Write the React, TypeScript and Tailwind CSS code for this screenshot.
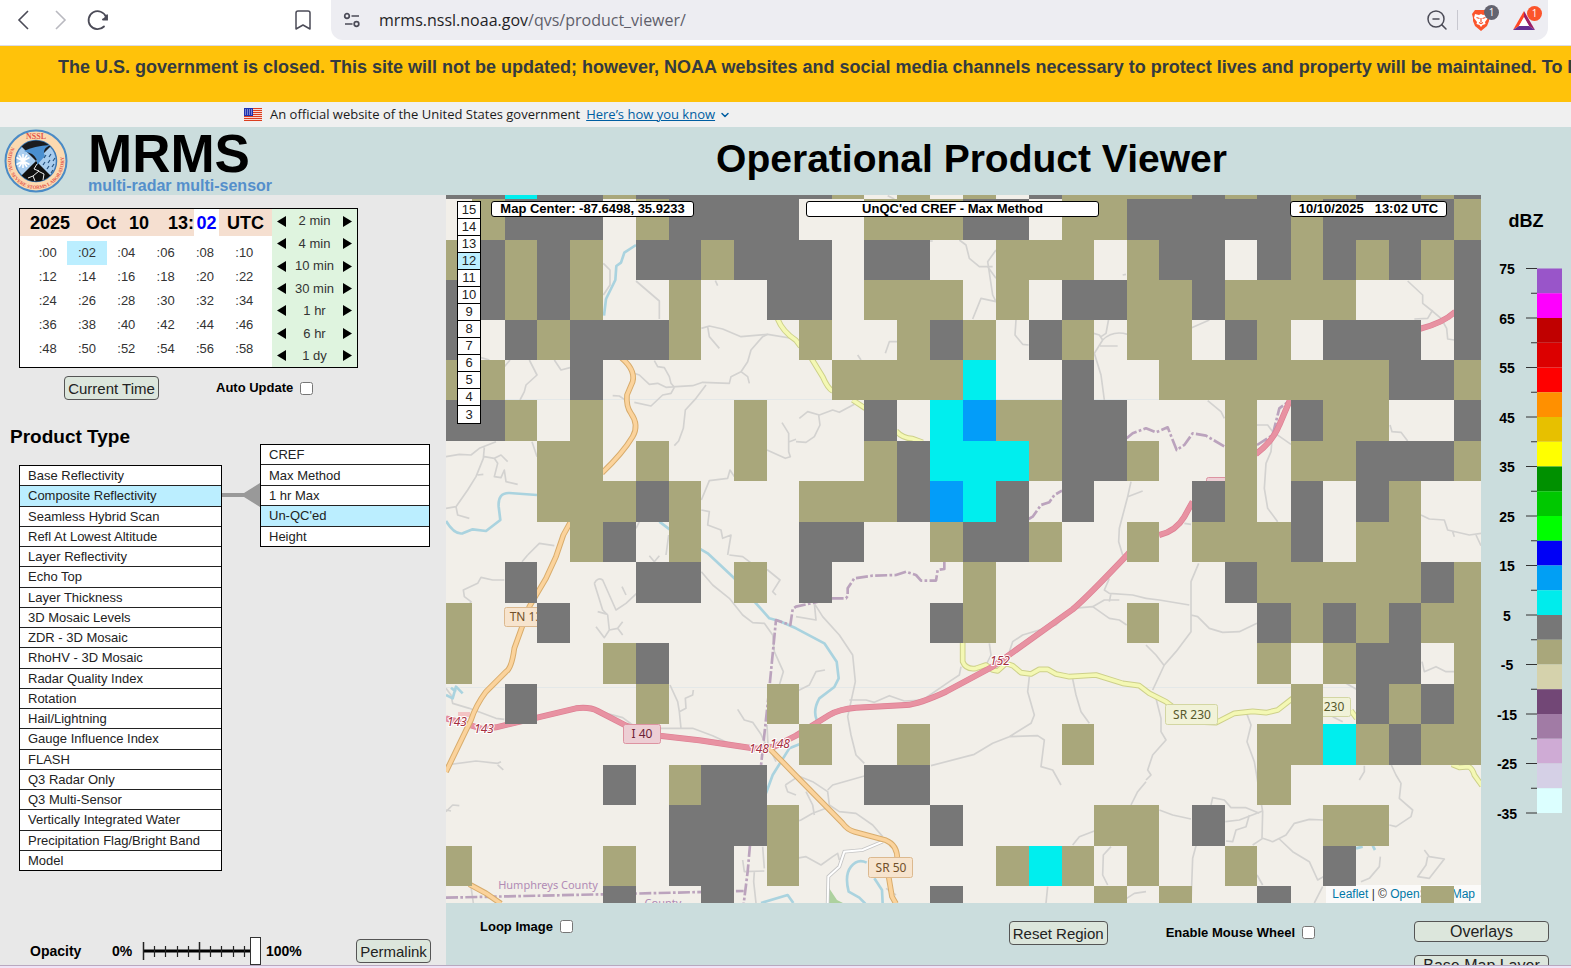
import { useState } from 'react'
import { ChevronDown, Bookmark, ZoomOut } from 'lucide-react'

const minutes = Array.from({ length: 30 }, (_, i) => ':' + String(i * 2).padStart(2, '0'))

const steps = ['2 min', '4 min', '10 min', '30 min', '1 hr', '6 hr', '1 dy']

const products = [
  'Base Reflectivity',
  'Composite Reflectivity',
  'Seamless Hybrid Scan',
  'Refl At Lowest Altitude',
  'Layer Reflectivity',
  'Echo Top',
  'Layer Thickness',
  '3D Mosaic Levels',
  'ZDR - 3D Mosaic',
  'RhoHV - 3D Mosaic',
  'Radar Quality Index',
  'Rotation',
  'Hail/Lightning',
  'Gauge Influence Index',
  'FLASH',
  'Q3 Radar Only',
  'Q3 Multi-Sensor',
  'Vertically Integrated Water',
  'Precipitation Flag/Bright Band',
  'Model',
]

const subProducts = ['CREF', 'Max Method', '1 hr Max', "Un-QC'ed", 'Height']

const zoomLevels = [15, 14, 13, 12, 11, 10, 9, 8, 7, 6, 5, 4, 3]

// k = -5..0 dBZ, g = 0..5, c = 5..10, b = 10..15
const radar = [
  'ggcggkggggggk.k.k.gkkkkgkgkkggkg',
  '.kggg.kgggg..kkkgg.kkgggggkggggk',
  'kgkgk.ggkggg.gg..kkk.kgg.gkgkgkg',
  'ggkgk..k..gg.kkk.k.ggkkgkkkk...g',
  'g.gkgggk...k..kgk.gk.kk.gk.ggg.g',
  'kk..g.......kkkkc..g..kkkkkkkggk',
  'ggk.k....k...g.cbkkgg...k.gkk..g',
  '...kk.k..k...kgccckggk..k.kkgggk',
  '...kkkgk...kkkgbcg.g...gk.g.gk..',
  '....kg.k...gg..kggk..k.kkkg.kk..',
  '..g...gg.k.g....k.......gkkkkkgk',
  'k..g...........gk....k...gkgkgkk',
  'k....kg..................k.kgg.k',
  '..g...k...k...............k.gkgk',
  '...........k..k....k.....kkckgkk',
  '.....g.kgg...gg..........k......',
  '.......gggk....g....kk.g...kk...',
  'k....k.gg.k......kck.k..k..g....',
  '.....g..g......g....k.k..g....k.',
]

const colX = [
  0, 26, 59, 91, 124, 157, 190, 223, 255, 288, 321, 353, 386, 418, 451, 484, 517, 550, 583, 616,
  648, 681, 713, 746, 779, 811, 845, 877, 910, 943, 975, 1008, 1035,
]
const rowY = [
  0, 4, 45, 85, 125, 165, 205, 246, 286, 327, 367, 408, 448, 489, 529, 570, 610, 651, 691, 708,
]

const cellColor: Record<string, string> = {
  k: '#a9a77b',
  g: '#777777',
  c: '#00eeee',
  b: '#039df9',
}

const scale = [
  '#9955c9', '#fe00fe', '#c00000', '#dc0000', '#ff0000', '#ff9000', '#e7c000', '#ffff00',
  '#009000', '#00c800', '#00ff00', '#0000f6', '#019ff4', '#00ecec', '#777777', '#a9a77b',
  '#d5d2ac', '#724776', '#a17ba5', '#cfabd5', '#d5d0e6', '#dcffff',
]

const interstate = [
  'M0 1570L45 1582L110 1602L150 1597L273 1568L390 1540Q430 1535 455 1548L540 1592L600 1612L640 1622L760 1636L930 1661L985 1655L1050 1622L1150 1560Q1180 1542 1230 1538L1380 1530Q1420 1527 1500 1490L1640 1415L1700 1372L1880 1243Q1920 1210 2045 1078L2080 1040',
  'M2140 1020Q2190 1008 2215 965L2240 920',
  'M2430 777Q2480 740 2500 690L2532 615',
  'M2920 402Q2990 385 3028 350',
]
const stateRoads = [
  'M515 480Q570 520 560 560L543 600Q540 635 555 655Q580 690 560 725Q530 775 468 834',
  'M373 982L352 1020L330 1085L300 1150L250 1235L205 1360Q197 1420 180 1430L120 1490Q90 1530 75 1575L0 1730',
  'M70 2068L120 2095L165 2126',
  'M968 1658L1050 1742L1190 1885Q1205 1905 1225 1910L1320 1936Q1355 1950 1354 1995L1328 2045L1338 2105L1350 2126',
]
const yellowRoads = [
  'M995 372Q1010 410 1050 436L1064 455',
  'M1096 490L1130 545Q1145 580 1160 588',
  'M1220 615L1258 640',
  'M1350 708Q1370 730 1400 731L1430 742',
  'M1550 1340V1400Q1560 1425 1590 1420L1620 1410L1640 1425L1655 1428L1680 1405L1700 1412L1725 1433L1755 1437L1780 1423H1805L1830 1437L1870 1445L1950 1440L2030 1465L2080 1472L2110 1495L2160 1520L2240 1580L2310 1583L2365 1555L2420 1549L2460 1553L2495 1545L2540 1510',
  'M2715 1547L2732 1570',
  'M3018 1708L3040 1717L3068 1715Q3080 1722 3085 1740L3108 1772',
]
const rivers = [
  'M570 150L535 173L525 203L511 213L508 255L480 312L474 362',
  'M273 900L190 894Q155 893 158 935L163 975L120 1008L80 1003L50 1015Q25 1020 0 978',
  'M640 980L700 1025L785 1075L865 1150L930 1225L970 1270L1000 1278L1050 1300L1135 1345L1172 1400L1178 1450L1165 1476L1120 1510Q1100 1545 1112 1575',
  'M1060 1648L1030 1660L980 1740L960 1795',
  'M945 2124L1025 2100L1042 2124',
  'M1258 2126L1240 2108L1208 2090Q1195 2040 1215 2015Q1235 1990 1262 2003',
  'M1285 2050L1308 2085L1310 2126',
  'M0 1500L20 1510L30 1475L50 1495M15 1478L30 1490',
  'M2730 1960L2750 1955M2780 1952L2787 1965',
]
const county = [
  'M1748 972L1760 965L1785 930L1810 922L1825 900L1848 887',
  'M2042 730L2060 715L2100 700L2130 712L2165 697L2180 735L2192 765L2215 750L2240 715L2280 722L2338 756',
  'M2433 750L2480 720L2500 640L2530 618',
  'M1495 1100V1122L1475 1125L1470 1157H1425L1410 1140L1380 1130L1350 1140L1280 1142L1225 1150L1205 1180V1203L1200 1210L1160 1210L1050 1235L1040 1242L1033 1290L990 1275L970 1480L945 1712',
  'M912 1950L905 2030L893 2126',
  'M0 2108L470 2098L893 2088',
]
const lanes = [
  'M472 205L492 225V270L472 300M570 258L640 318V372',
  'M105 488L130 495M175 515L192 495M250 495L273 540L240 570L235 590L222 615M325 495L345 525L372 518',
  'M500 602L520 603L548 622M560 533L580 540L610 568L635 565L660 577L690 575L740 572L770 562L850 565L855 545L885 530L905 500L915 465L950 425L965 418L1050 432M625 497L635 515L655 518L670 545L675 565L685 577L675 595L650 600L615 633L565 622M780 570L750 610L718 645L712 700L698 738L685 752M885 530L905 545L910 565',
  'M766 400L790 393L830 402L885 425L965 418M785 395L790 425L820 460M808 257L815 272',
  'M0 785L40 778L75 780L100 760L150 740M115 757L112 790L90 845L65 885L30 935L0 940M115 785L145 790L155 805L145 845L165 848L175 825L180 860L215 868M145 790L165 780L185 800M30 935L35 960L70 970M258 740L273 785M95 840L112 838',
  'M766 915L790 857L845 850L852 825L865 845M766 945L790 950L785 990L825 1005L830 1030L855 1020L850 1050L845 1080M1008 683L1028 715V770L1033 785L1018 790L963 765M1030 740L1050 733',
  'M245 1080L280 1045L325 1052M570 1000L580 980M660 1080L668 1020',
  'M245 1080L228 1100M175 1155H140L105 1147L95 1165L52 1185L55 1205L75 1220L68 1235',
  'M445 1165Q455 1145 470 1155L510 1245L540 1225L572 1195M445 1165L470 1245L485 1260L490 1305L515 1300L530 1280M450 1295L475 1328L490 1305M515 1300L530 1320M528 1175L540 1200M455 1250L485 1258M610 1082L625 1100L640 1082',
  'M766 1130L800 1170L850 1210L890 1260L920 1283L955 1285L980 1320L985 1370L1012 1430L1000 1470M850 1080L890 1085L930 1115L965 1125L1002 1155L980 1190L990 1200',
  'M672 1470L695 1520L700 1550L705 1600M700 1550L720 1540L718 1510L740 1500L742 1485M640 1600L740 1600L800 1622L860 1650L930 1655M875 1543L895 1575L920 1582L945 1618L960 1650M455 1548L530 1568L560 1590',
  'M0 1480L15 1500L20 1525L70 1540L150 1570L175 1573M0 1710L90 1698L155 1705L165 1700M155 1710L172 1725M0 1850L20 1830L40 1832M0 1845L15 1848M75 2075L82 2124',
  'M963 1590L966 1650L990 1700M1018 1770L1048 1750M1018 1770L1025 1790L1050 1800M950 1955L955 2020M890 1995L895 2030L955 2028M925 2030L923 2060L930 2124',
  'M1400 138H1460M1540 135L1560 150L1570 190L1600 215H1640M1650 165L1625 200L1640 300L1650 320L1605 310L1580 372M1625 215L1650 250',
  'M1318 475L1330 440H1353M1235 480L1245 495M1710 375L1707 420L1730 448L1748 450M1325 2L1345 12',
  'M1060 670L1085 650L1120 660L1160 645L1180 652L1225 628M1118 660L1122 690L1105 725L1080 742L1050 740',
  'M1943 415L1960 420L1970 435L1945 475L1965 540L1975 615M1970 435Q2000 405 2045 418M1962 453H2015M1988 372L1980 415L1965 425M2030 240L2040 238',
  'M2055 860L2045 905L2090 888M2045 905L2020 1000L2018 1040L2030 1080',
  'M2237 398L2290 375M2885 258L2930 300L2930 325L2955 345L2985 370L3002 400L3005 432L3025 435M2905 372L2945 370L2960 345',
  'M2285 617L2325 650L2335 670M2433 690L2465 690L2480 710L2535 748M2480 710L2475 770L2460 805L2455 880L2465 940L2495 980M2832 690L2838 710L2865 712L2885 738M2925 960L2950 972L2995 975L3005 1005L3070 1020L3105 1015M3090 1020L3105 1052M3025 1025L3020 1010M2215 985L2235 988',
  'M1050 1265L1110 1275L1105 1225M1105 1225L1130 1265L1180 1320L1220 1380L1228 1460L1215 1520L1205 1565L1215 1620L1230 1680L1255 1705M1050 1490L1090 1470L1110 1430L1137 1425M1210 1515L1260 1515L1285 1522L1330 1502L1375 1518L1430 1515M1430 1515L1510 1460L1540 1440L1545 1415M1630 1345L1635 1380L1620 1410',
  'M1455 1712L1585 1678L1640 1645L1690 1625L1755 1585L1765 1560L1745 1490L1750 1445M1690 1625L1775 1622L1795 1635L1785 1715L1820 1725L1845 1770M1880 1452L1890 1500L1905 1550L1930 1585M1690 1370L1700 1340L1730 1320L1830 1290L1880 1240L1940 1235L1975 1215L2020 1215M1940 1235L1990 1270L2020 1275L2042 1290M1990 1150L1975 1185L1990 1195L2060 1200L2100 1210M1990 1220L1995 1195',
  'M1050 1740L1100 1760L1145 1790L1150 1830L1180 1850L1230 1855L1280 1890L1310 1925M1145 1785L1160 1770L1255 1743M1050 1880L1065 1875L1100 1855L1140 1840M1080 1790L1100 1830L1105 1860M1050 1990L1080 1985L1125 2010L1160 1985L1175 1975L1180 1995M1350 2100L1320 2080',
  'M2100 1760L2075 1790L2055 1830M1880 1950L1900 1925L1945 1908M1995 1955L1972 1980L1970 2040L1985 2070M1805 2075L1800 2124M2042 2110L2065 2095L2100 2090',
  'M2258 1105L2235 1160V1310L2190 1370L2155 1410L2120 1485M2100 1350L2130 1380L2155 1412M2100 1210L2140 1215L2230 1230M2235 1260L2255 1265L2290 1300L2330 1312L2380 1310L2433 1285M2130 1510L2145 1570V1610L2160 1635L2120 1680L2105 1725L2115 1740L2100 1755M2400 1550L2415 1590L2403 1640L2425 1700L2435 1760L2450 1850L2448 1930',
  'M2140 1845L2180 1860L2235 1872M2295 1830L2300 1808L2335 1815L2355 1838L2400 1838L2440 1855M2338 1880L2380 1875L2450 1848M2410 1860L2400 1895L2370 1905L2360 1940L2340 1938M2450 1930L2480 1940L2520 1920L2545 1885L2590 1873L2632 1875M2500 1932L2540 1970L2590 2000L2615 2055L2632 2045M2450 1930L2420 1950M2250 1952L2240 1990L2235 2124M2433 2040L2450 2070M2630 2075L2605 2124',
  'M2836 1710L2850 1740L2865 1765L2860 1810L2900 1845L2895 1865L2850 1895L2830 1890M2740 1755L2755 1730L2755 1712M2803 1985L2800 2015L2770 2050L2745 2060M2935 1965L2950 1985L2995 1992L2950 2050L2915 2045L2940 2010L2945 1985M2700 1465L2735 1485M2928 1400L2935 1430L2970 1415L3000 1430L3024 1430M2660 1565L2690 1580',
]

function NsslSeal() {
  return (
    <svg viewBox="0 0 64 64" className="size-16" role="img" aria-label="NSSL">
      <defs>
        <path id="ringBottom" d="M7.750 18A28 28 0 1 0 56.250 18" />
      </defs>
      <circle cx="32" cy="32" r="30.500" fill="#fbd9b0" stroke="#4a8bc6" strokeWidth="2" />
      <circle cx="32" cy="32" r="20.500" fill="#a9cdee" stroke="#3b79b5" strokeWidth="1.500" />
      <path d="M17.500 17.500A20.500 20.500 0 0 1 46.500 17.500L32 32z" fill="#1b1c20" />
      <path d="M17.500 46.500A20.500 20.500 0 0 0 46.500 46.500L32 32z" fill="#111" />
      <path d="M20 22Q30 17 46 16Q37 21 41 27L33 36Q34 29 28 25z" fill="#4a8fd0" />
      <path d="M19 25v14M12.500 28.500l13 7M12.500 35.500l13-7M15 26l8 12M23 26l-8 12" stroke="#fff" strokeWidth="1.600" />
      <path d="M42 26l-2 3M47 25l-2 3M51 29l-2 3M41 33l-2 3M46 31l-2 3M45 37l-2 3M50 35l-2 3M49 41l-2 3" stroke="#27527e" strokeWidth="1.200" />
      <path d="M33 35l-3 5 5 2-6 5 2 5M34 42l6 3-1 6M29 47l-5 2" stroke="#eee" strokeWidth="1" fill="none" />
      <text fontSize="8" fontWeight="700" fill="#e2574c" fontFamily="Liberation Serif, serif" textAnchor="middle" x="32" y="10">
        NSSL
      </text>
      <text fontSize="5" fontWeight="700" fill="#e2574c" fontFamily="Liberation Serif, serif">
        <textPath href="#ringBottom">NATIONAL SEVERE STORMS LABORATORY</textPath>
      </text>
    </svg>
  )
}

function Flag() {
  return (
    <svg viewBox="0 0 18 13" className="h-[13px] w-[18px]" aria-hidden="true">
      <rect width="18" height="13" fill="#fff" />
      {[0, 2, 4, 6, 8, 10, 12].map((y) => (
        <rect key={y} y={y} width="18" height="1.200" fill="#db3e1f" />
      ))}
      <rect width="9" height="8" fill="#1e33b1" />
      <path d="M1 2h7M1 4h7M1 6h7" stroke="#fff" strokeWidth=".8" strokeDasharray="1 1" />
    </svg>
  )
}

function BrowserBar() {
  return (
    <div className="flex h-[46px] shrink-0 items-start border-b border-[#dcdce6] bg-white text-[#4b4b57]">
      <div className="flex h-10 w-[331px] shrink-0 items-center pl-[17px] pr-4">
        <button aria-label="Back">
          <svg viewBox="0 0 12 20" className="h-5 w-3" fill="none" stroke="currentColor" strokeWidth="1.600">
            <path d="M11 1L2 10l9 9" />
          </svg>
        </button>
        <button aria-label="Forward" className="ml-[26px] text-[#b9b9c0]">
          <svg viewBox="0 0 12 20" className="h-5 w-3" fill="none" stroke="currentColor" strokeWidth="1.600">
            <path d="M1 1l9 9-9 9" />
          </svg>
        </button>
        <button aria-label="Reload" className="ml-[19px]">
          <svg viewBox="0 0 24 24" className="size-6" fill="none" stroke="currentColor" strokeWidth="1.800" strokeLinecap="round">
            <path d="M18 18.500A9 9 0 1 1 20 9" />
            <path d="M21.500 6v6h-5.500z" fill="currentColor" stroke="none" />
            <path d="M21 7.500v4h-4" />
          </svg>
        </button>
        <button aria-label="Bookmark" className="ml-auto"><Bookmark className="size-6" strokeWidth={1.500} /></button>
      </div>
      <div className="mr-[23px] flex h-10 grow items-center rounded-xl rounded-t-none bg-[#ededf2] pl-3 pr-3">
        <svg viewBox="0 0 18 18" className="size-[18px]" fill="none" stroke="currentColor" strokeWidth="1.700" aria-hidden="true">
          <circle cx="4" cy="5" r="2.300" />
          <path d="M8.500 5H16M2 13h7.500" />
          <circle cx="13.500" cy="13" r="2.300" />
        </svg>
        <span className="ml-[18px] font-['Open_Sans',sans-serif] text-base text-[#5f5f6b]">
          <span className="text-[#1f1f26]">mrms.nssl.noaa.gov</span>/qvs/product_viewer/
        </span>
        <button aria-label="Zoom out" className="ml-auto"><ZoomOut className="size-6" strokeWidth={1.500} /></button>
        <span className="ml-2 h-5 w-px bg-[#c8c8d0]" />
        <button aria-label="Shields" className="relative ml-3">
          <svg viewBox="0 0 22 24" className="h-6 w-[22px]">
            <path d="M5 2h12l3 4-1 4 0 3-2 5-6 5-6-5-2-5V10L2 6z" fill="#fb542b" />
            <path d="M5 6l4 1 2-1 2 1 4-1 1 4-3 4 .5 2-3 1L11 19l-1.500-2-3-1L7 14l-3-4z" fill="#fff" />
            <path d="M6.500 9.500l3 1M15.500 9.500l-3 1M11 10v4M9 14.500l2 1 2-1" stroke="#fb542b" strokeWidth="1.200" fill="none" />
          </svg>
          <span className="absolute -top-[3px] left-[14px] flex size-[15px] items-center justify-center rounded-full bg-[#63636f] font-['Open_Sans',sans-serif] text-[10px] text-white">1</span>
        </button>
        <button aria-label="Rewards" className="relative ml-5">
          <svg viewBox="0 0 24 21" className="h-[21px] w-6">
            <path d="M12 1L1 20l6-4 5-9z" fill="#ff4724" />
            <path d="M12 1l11 19-6-4-5-9z" fill="#9e1f63" />
            <path d="M1 20h22l-6-4H7z" fill="#662d91" />
            <path d="M12 7.500l5 8.500H7z" fill="#fff" />
          </svg>
          <span className="absolute -top-[4px] left-[15px] flex size-[15px] items-center justify-center rounded-full bg-[#fb542b] font-['Open_Sans',sans-serif] text-[10px] text-white">1</span>
        </button>
      </div>
    </div>
  )
}

function TimePicker() {
  const [minute, setMinute] = useState(':02')
  return (
    <div className="flex h-[160px] w-[339px] border border-black bg-white">
      <div className="flex grow flex-col">
        <div className="flex h-[27px] items-center bg-[#f5dfd0] pl-[10px] text-lg font-bold">
          <span className="w-[56px]">2025</span>
          <span className="w-[43px]">Oct</span>
          <span className="w-[39px]">10</span>
          <span className="w-[26px]">13:</span>
          <span className="flex h-full w-[25px] items-center justify-center bg-white text-[#0000ff]">02</span>
          <span className="ml-2">UTC</span>
        </div>
        <div className="mx-2 mt-[5px] grid grid-cols-6">
          {minutes.map((m) => (
            <button
              key={m}
              onClick={() => setMinute(m)}
              className={`h-6 text-[13px] text-[#333] ${m === minute ? 'bg-[#bbeeff]' : ''}`}
            >
              {m}
            </button>
          ))}
        </div>
      </div>
      <div className="flex w-[85px] flex-col bg-[#dff4df] pt-px">
        {steps.map((s) => (
          <div key={s} className="flex grow items-center justify-between px-[5px] text-[13px] text-[#333]">
            <button aria-label={`Back ${s}`}>
              <svg viewBox="0 0 9 11" className="h-[11px] w-[9px]"><path d="M0 5.500L9 0v11z" /></svg>
            </button>
            <span>{s}</span>
            <button aria-label={`Forward ${s}`}>
              <svg viewBox="0 0 9 11" className="h-[11px] w-[9px]"><path d="M9 5.500L0 0v11z" /></svg>
            </button>
          </div>
        ))}
      </div>
    </div>
  )
}

function Menu({ items, active, className }: { items: string[]; active: string; className: string }) {
  return (
    <ul className={`flex flex-col divide-y divide-[#222] border border-black bg-white ${className}`}>
      {items.map((item) => (
        <li key={item} className="flex grow basis-0">
          <button className={`w-full pl-2 text-left text-[13px] leading-none text-[#222] ${item === active ? 'bg-[#bbeeff]' : ''}`}>
            {item}
          </button>
        </li>
      ))}
    </ul>
  )
}

function Sidebar() {
  const [opacity, setOpacity] = useState(100)
  return (
    <aside className="flex w-[446px] shrink-0 flex-col bg-[#e8e8e8] pt-[13px]">
      <div className="pl-[19px]">
        <TimePicker />
        <div className="mt-2 flex items-center pl-[45px]">
          <button className="h-6 w-[95px] rounded border border-[#555] bg-[#dce6dc] text-[15px] leading-none text-[#222]">Current Time</button>
          <label htmlFor="auto" className="ml-[57px] text-[13px] font-bold">Auto Update</label>
          <input id="auto" type="checkbox" className="ml-[7px] size-[13px]" />
        </div>
      </div>
      <h2 className="mt-[25px] pl-[10px] text-[19px] font-bold leading-6">Product Type</h2>
      <div className="flex items-start pl-[19px]">
        <Menu items={products} active="Composite Reflectivity" className="mt-4 h-[406px] w-[203px]" />
        <svg viewBox="0 0 38 24" className="mt-[34px] h-6 w-[38px]" aria-hidden="true">
          <path d="M0 10h22L38 0v24L22 14H0z" fill="#999" />
        </svg>
        <Menu items={subProducts} active="Un-QC'ed" className="-mt-[5px] h-[103px] w-[170px]" />
      </div>
      <div className="mt-auto flex items-center pl-[30px] text-[14px] font-bold">
        <label htmlFor="opacity" className="w-[82px]">Opacity</label>
        <span className="w-[30px]">0%</span>
        <div className="relative flex h-7 w-[119px] items-center">
          <svg viewBox="0 0 119 28" className="absolute inset-0" aria-hidden="true">
            <path d="M1 14h110" stroke="#000" strokeWidth="3" />
            <path d="M1.500 5v18M57.500 5v18" stroke="#222" strokeWidth="1.500" />
            <path d="M12.500 9v11M23.500 9v11M35.500 9v11M46.500 9v11M68.500 9v11M79.500 9v11M91.500 9v11M102.500 9v11" stroke="#222" strokeWidth="1.200" />
          </svg>
          <input
            id="opacity"
            type="range"
            value={opacity}
            onChange={(e) => setOpacity(Number(e.target.value))}
            className="relative h-7 w-full appearance-none bg-transparent [&::-webkit-slider-thumb]:h-7 [&::-webkit-slider-thumb]:w-[11px] [&::-webkit-slider-thumb]:appearance-none [&::-webkit-slider-thumb]:border [&::-webkit-slider-thumb]:border-[#333] [&::-webkit-slider-thumb]:bg-white"
          />
        </div>
        <span className="ml-[5px]">100%</span>
        <button className="ml-auto mr-[15px] h-6 w-[75px] rounded border border-[#555] bg-[#dce6dc] text-[15px] font-normal leading-none text-[#222]">Permalink</button>
      </div>
    </aside>
  )
}

function Lines({ paths, color, width, dash }: { paths: string[]; color: string; width: number; dash?: string }) {
  return (
    <g stroke={color} strokeWidth={width} strokeDasharray={dash} fill="none" strokeLinejoin="round">
      {paths.map((d) => (
        <path key={d} d={d} />
      ))}
    </g>
  )
}

function BaseMap() {
  return (
    <svg viewBox="0 0 1035 708" className="block w-full" role="img" aria-label="Street map">
      <rect width="1035" height="708" fill="#f2efe9" />
      <path d="M0 204.500h1035M0 492.500h1035" stroke="#e4e8e8" />
      <path d="M383 708V693l8 12 6 3z" fill="#add19e" />
      <path d="M12 517h12v5H12z" fill="#f3c3c3" />
      <g transform="scale(0.333333)">
        <Lines paths={lanes} color="#d3d2d0" width={5} />
        <Lines paths={rivers} color="#aad3df" width={8} />
        <Lines paths={county} color="#bba3bd" width={8} dash="36 7 8 7" />
        <path d="M1145 2126L1147 2045L1180 2015L1195 1970L1250 1965L1310 1940" stroke="#c4c4c4" strokeWidth="11" fill="none" />
        <path d="M1145 2126L1147 2045L1180 2015L1195 1970L1250 1965L1310 1940" stroke="#fff" strokeWidth="6" fill="none" />
        <Lines paths={yellowRoads} color="#cdd08a" width={17} />
        <Lines paths={yellowRoads} color="#f4f8b4" width={11} />
        <Lines paths={interstate} color="#dd7f93" width={18} />
        <Lines paths={interstate} color="#e892a2" width={14} />
        <Lines paths={stateRoads} color="#d8ac6c" width={17} />
        <Lines paths={stateRoads} color="#fbd39c" width={11} />
      </g>
      <g fontFamily="'Noto Sans', sans-serif" fontSize="12" textAnchor="middle">
        <rect x="58.500" y="412.500" width="44" height="19" rx="2" fill="#f7e4ce" stroke="#dcb98f" />
        <text x="80" y="426" fill="#71502a">TN 13</text>
        <rect x="177.500" y="529.500" width="37" height="19" rx="2" fill="#edced4" stroke="#dd93a1" />
        <text x="196" y="543" fill="#6d1f36">I 40</text>
        <rect x="422.500" y="662.500" width="44" height="20" rx="2" fill="#f7e4ce" stroke="#dcb98f" />
        <text x="445" y="677" fill="#71502a">SR 50</text>
        <rect x="719.500" y="509.500" width="52" height="20" rx="2" fill="#f1f2d8" stroke="#d3d6a2" />
        <text x="746" y="524" fill="#55582c">SR 230</text>
        <rect x="852.500" y="502.500" width="52" height="19" rx="2" fill="#f1f2d8" stroke="#d3d6a2" />
        <text x="888" y="516" fill="#55582c">230</text>
        <rect x="760.500" y="282.500" width="44" height="19" rx="2" fill="#edced4" stroke="#dd93a1" />
        <g fontSize="12" fontStyle="italic" fill="#a5303f" stroke="#fff" strokeWidth="2" paintOrder="stroke">
          <text x="11" y="531">143</text>
          <text x="38" y="538">143</text>
          <text x="313" y="558">148</text>
          <text x="334" y="553">148</text>
          <text x="554" y="470">152</text>
        </g>
        <g fontSize="11" fill="#b18bb5">
          <text x="102" y="694">Humphreys County</text>
          <text x="217" y="712">County</text>
        </g>
      </g>
    </svg>
  )
}

function RadarMap() {
  return (
    <div className="relative overflow-hidden">
      <BaseMap />
      <div className="absolute bottom-0 right-0 bg-white/70 px-[6px] text-[12px] leading-[18px] text-[#333]">
        <a href="#leaflet" className="text-[#0078a8]">Leaflet</a> | © <a href="#osm" className="text-[#0078a8]">OpenStreetMap</a>
      </div>
      <svg viewBox="0 0 1035 708" className="pointer-events-none absolute inset-0 w-full" shapeRendering="crispEdges" aria-hidden="true">
        {radar.map((row, r) =>
          row.split('').map((c, i) =>
            c === '.' ? null : (
              <rect
                key={`${r}-${i}`}
                x={colX[i]}
                y={rowY[r]}
                width={colX[i + 1] - colX[i]}
                height={rowY[r + 1] - rowY[r]}
                fill={cellColor[c]}
              />
            ),
          ),
        )}
      </svg>
      <div className="absolute inset-x-0 top-[6px] flex items-start pl-[11px] pr-[34px] text-[13px] font-bold leading-[14px]">
        <div className="flex w-6 flex-col divide-y divide-black border border-black bg-white font-normal">
          {zoomLevels.map((z) => (
            <button key={z} className={`h-[17px] text-[13px] leading-4 text-[#222] ${z === 12 ? 'bg-[#bbeeff]' : ''}`}>{z}</button>
          ))}
        </div>
        <div className="ml-[10px] w-[203px] rounded-[3px] border border-black bg-white text-center">Map Center: -87.6498, 35.9233</div>
        <div className="ml-[112px] w-[293px] rounded-[3px] border border-black bg-white text-center">UnQC'ed CREF - Max Method</div>
        <div className="ml-auto w-[157px] whitespace-pre rounded-[3px] border border-black bg-white text-center">10/10/2025   13:02 UTC</div>
      </div>
    </div>
  )
}

function Legend() {
  return (
    <svg viewBox="0 0 90 640" className="h-[640px] w-[90px] shrink-0" fontFamily="'Liberation Sans', sans-serif" fontWeight="700" textAnchor="middle" role="img" aria-label="dBZ colour scale">
      <text x="45" y="32" fontSize="18">dBZ</text>
      {scale.map((color, i) => (
        <rect key={color + i} x="56" y={73.500 + i * 24.750} width="25" height="24.750" fill={color} />
      ))}
      {scale.map((_, i) => (
        <path key={i} d={i % 2 === 0 ? `M45 ${73.500 + i * 24.750}h11` : `M50 ${73.500 + i * 24.750}h6`} stroke="#333" />
      ))}
      <path d="M45 618h11" stroke="#333" />
      {[75, 65, 55, 45, 35, 25, 15, 5, -5, -15, -25, -35].map((v, i) => (
        <text key={v} x="26" y={79 + i * 49.500} fontSize="14">{v}</text>
      ))}
    </svg>
  )
}

export default function App() {
  return (
    <div className="flex h-screen flex-col overflow-hidden bg-[#cbdddd] font-['Liberation_Sans',Arial,sans-serif] text-black">
      <BrowserBar />
      <div className="h-14 shrink-0 overflow-hidden whitespace-nowrap bg-[#ffc20a] pl-[58px] pt-2 text-[18px] font-bold leading-[26px] text-[#343a40]">
        The U.S. government is closed. This site will not be updated; however, NOAA websites and social media channels necessary to protect lives and property will be maintained. To learn more, visit commerce.gov.
      </div>
      <div className="flex h-[25px] shrink-0 items-center bg-[#f0f0f0] pl-[244px] font-['Open_Sans',sans-serif] text-[13px] text-[#1b1b1b]">
        <Flag />
        <span className="ml-2">An official website of the United States government</span>
        <a href="#know" className="ml-[6px] text-[#005ea2] underline">Here’s how you know</a>
        <ChevronDown className="ml-1 size-3 text-[#005ea2]" strokeWidth={3} />
      </div>
      <header className="flex h-[68px] shrink-0 items-center">
        <div className="flex w-[446px] items-center pl-1">
          <NsslSeal />
          <div className="ml-5">
            <div className="text-[53px] font-bold leading-[50px]">MRMS</div>
            <div className="text-base font-bold leading-[14px] text-[#548fcb]">multi-radar multi-sensor</div>
          </div>
        </div>
        <h1 className="grow pb-[6px] pr-[74px] text-center text-[39px] font-bold leading-none">Operational Product Viewer</h1>
      </header>
      <main className="flex min-h-0 grow">
        <Sidebar />
        <div className="flex min-w-0 grow flex-col">
          <div className="flex items-start">
            <div className="min-w-0 grow">
              <RadarMap />
            </div>
            <Legend />
          </div>
          <div className="flex min-h-0 grow items-start overflow-hidden pl-[34px] pr-[22px] text-[13px] font-bold">
            <div className="mt-[14px] flex items-center">
              <label htmlFor="loop">Loop Image</label>
              <input id="loop" type="checkbox" className="ml-[7px] size-[13px]" />
            </div>
            <button className="ml-auto mt-[18px] h-6 w-[99px] rounded border border-[#555] bg-[#dce6dc] text-[15px] font-normal leading-none text-[#222]">Reset Region</button>
            <div className="ml-[58px] mt-5 flex items-center">
              <label htmlFor="wheel">Enable Mouse Wheel</label>
              <input id="wheel" type="checkbox" className="ml-[7px] size-[13px]" />
            </div>
            <div className="ml-[99px] mt-[18px] flex w-[135px] flex-col gap-[13px] text-base font-normal">
              <button className="h-[21px] rounded border border-[#555] bg-[#dce6dc] leading-none text-[#222]">Overlays</button>
              <button className="h-[21px] rounded border border-[#555] bg-[#dce6dc] leading-none text-[#222]">Base Map Layer</button>
            </div>
          </div>
        </div>
      </main>
      <div className="h-[3px] shrink-0 border-t border-[#b9a8c0] bg-[#f0e4f6]" />
    </div>
  )
}
